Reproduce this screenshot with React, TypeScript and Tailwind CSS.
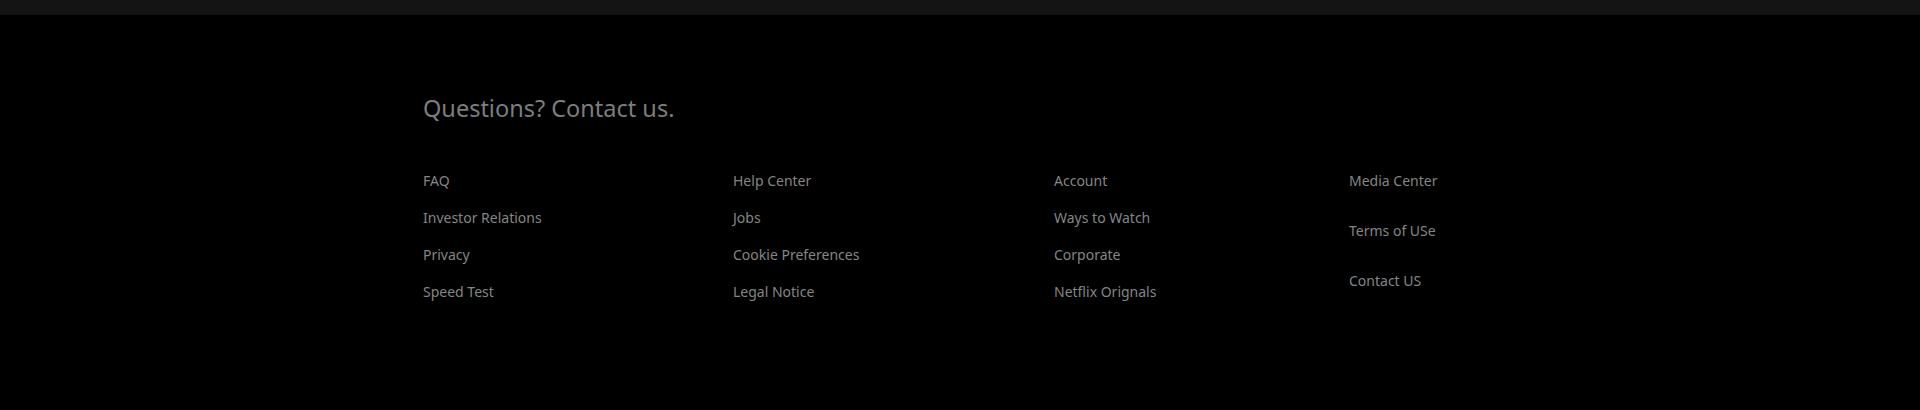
const columns: string[][] = [
  ["FAQ", "Investor Relations", "Privacy", "Speed Test"],
  ["Help Center", "Jobs", "Cookie Preferences", "Legal Notice"],
  ["Account", "Ways to Watch", "Corporate", "Netflix Orignals"],
  ["Media Center", "Terms of USe", "Contact US"],
];

export default function App() {
  return (
    <div className="min-h-[410px] w-full bg-black" style={{ fontFamily: '"Noto Sans", sans-serif' }}>
      <div className="h-[15px] w-full bg-[#141414]" />
      <footer className="pl-[423px] pt-[77px] text-[#7d7d7d]">
        <p className="text-[23.5px] leading-[32px]">Questions? Contact us.</p>
        <div className="mt-[47px] grid grid-cols-[310px_321px_295px_auto] text-[14px] leading-[20px] text-[#858585]">
          {columns.map((col, i) => (
            <ul key={i} className={`flex flex-col ${i === 3 ? "gap-[30px]" : "gap-[17px]"}`}>
              {col.map((link) => (
                <li key={link}>
                  <a href="#" className="hover:underline">
                    {link}
                  </a>
                </li>
              ))}
            </ul>
          ))}
        </div>
      </footer>
    </div>
  );
}
